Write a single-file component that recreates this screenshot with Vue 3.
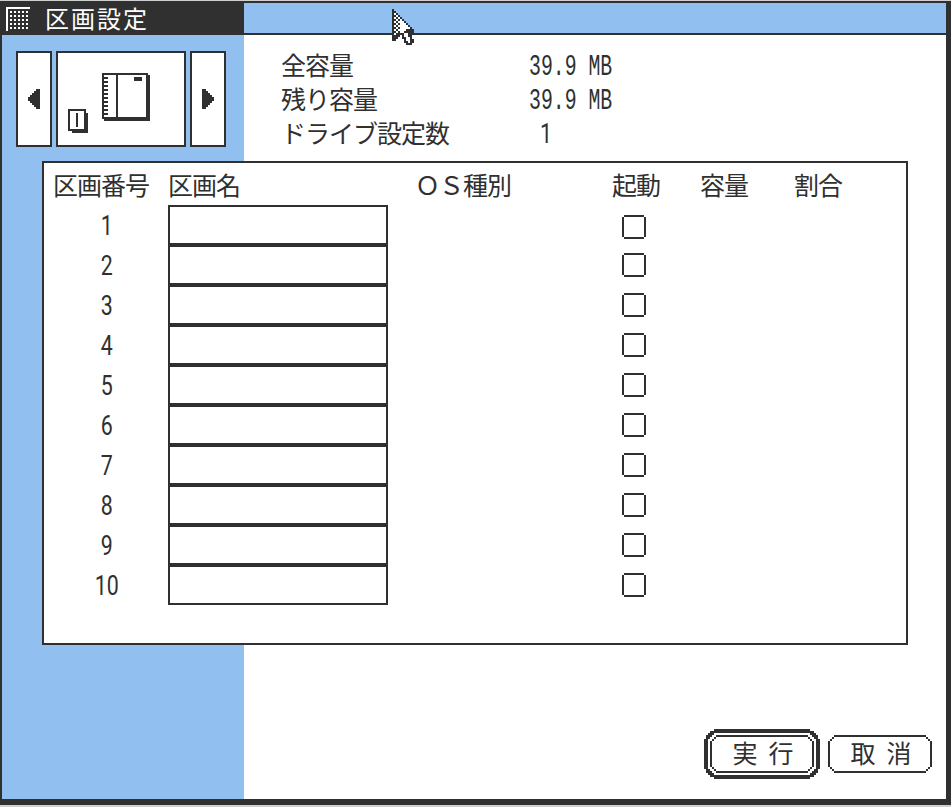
<script setup>
const rows = Array.from({ length: 10 }, (_, i) => i + 1)

// '#' is the outline, 'o' the white fill, '.' is transparent
const cursor = [
  '#..........',
  '##.........',
  '#o#........',
  '##o#.......',
  '#o#o#......',
  '##o#o#.....',
  '#o#ooo#....',
  '##o#ooo#...',
  '#o#ooooo#..',
  '##o#ooooo#.',
  '#o#oooo####',
  '##o#oo#####',
  '#o####oo#..',
  '####.#oo##.',
  '###..##oo#.',
  '##....#oo##',
  '......##o##',
  '.......###.'
]
const pixels = []
cursor.forEach((line, y) => {
  ;[...line].forEach((c, x) => {
    if (c !== '.') pixels.push({ x, y, fill: c === '#' ? '#303030' : '#fff' })
  })
})
const ticks = Array.from({ length: 10 }, (_, i) => 4 + i * 4)
const dots = []
for (let y = 0; y < 5; y++) for (let x = 0; x < 5; x++) dots.push([4 + x * 4, 4 + y * 4])
</script>

<template>
  <div class="screen">
    <div class="window">
      <header class="titlebar">
        <div class="title">
          <svg class="menu-icon" width="24" height="24" shape-rendering="crispEdges" fill="#fff">
            <path d="M0 0H24V2H2V24H0Z" />
            <rect v-for="(d, i) in dots" :key="i" :x="d[0]" :y="d[1]" width="2" height="2" />
          </svg>
          <span class="jp title-text">区画設定</span>
        </div>
        <div class="title-fill"></div>
      </header>
      <main class="body">
        <section class="top">
          <div class="selector">
            <button class="arrow">
              <svg width="12" height="20" shape-rendering="crispEdges" fill="#303030">
                <path d="M12 0H8V2H6V4H4V6H2V8H0V12H2V14H4V16H6V18H8V20H12Z" />
              </svg>
            </button>
            <div class="drive">
              <svg width="126" height="92" shape-rendering="crispEdges" fill="#303030">
                <g transform="translate(44 20)">
                  <path fill-rule="evenodd" d="M0 0H46V2H48V48H2V46H0ZM2 2V44H14V2ZM16 2V44H44V2Z" />
                  <rect x="32" y="4" width="8" height="4" />
                  <rect v-for="t in ticks" :key="t" x="2" :y="t" width="4" height="2" />
                </g>
                <g transform="translate(10 56)">
                  <path fill-rule="evenodd" d="M0 0H18V4H20V24H4V22H0ZM2 2V20H16V2Z" />
                  <rect x="8" y="4" width="2" height="14" />
                </g>
              </svg>
            </div>
            <button class="arrow">
              <svg width="12" height="20" shape-rendering="crispEdges" fill="#303030">
                <path d="M0 0H4V2H6V4H8V6H10V8H12V12H10V14H8V16H6V18H4V20H0Z" />
              </svg>
            </button>
          </div>
          <dl class="info">
            <dt class="jp">全容量</dt><dd><span class="mono">39.9 MB</span></dd>
            <dt class="jp">残り容量</dt><dd><span class="mono">39.9 MB</span></dd>
            <dt class="jp">ドライブ設定数</dt><dd class="count"><span class="num">1</span></dd>
          </dl>
        </section>

        <section class="panel">
          <div class="grid head jp">
            <span>区画番号</span><span>区画名</span><span>ＯＳ種別</span><span>起動</span><span>容量</span><span>割合</span>
          </div>
          <div v-for="n in rows" :key="n" class="grid row">
            <div class="index"><span class="num">{{ n }}</span></div>
            <div class="field"></div>
            <div></div>
            <svg class="check" :class="{ first: n === 1 }" width="24" height="24" shape-rendering="crispEdges" fill="#303030">
              <path d="M2 0H22V2H2ZM2 22H22V24H2ZM0 2H2V22H0ZM22 2H24V22H22Z" />
            </svg>
          </div>
        </section>

        <footer class="actions">
          <button class="btn primary">
            <svg width="116" height="50" shape-rendering="crispEdges" fill="#303030">
              <path fill-rule="evenodd" d="M10 0H106V2H110V4H112V6H114V10H116V40H114V44H112V46H110V48H106V50H10V48H6V46H4V44H2V40H0V10H2V6H4V4H6V2H10Z M10 4V6H8V8H6V10H4V40H6V42H8V44H10V46H106V44H108V42H110V40H112V10H110V8H108V6H106V4Z" />
              <path d="M12 6H104V8H12ZM12 42H104V44H12ZM6 12H8V38H6ZM108 12H110V38H108ZM10 8H12V10H10ZM8 10H10V12H8ZM104 8H106V10H104ZM106 10H108V12H106ZM8 38H10V40H8ZM10 40H12V42H10ZM106 38H108V40H106ZM104 40H106V42H104Z" />
            </svg>
            <span class="jp">実行</span>
          </button>
          <button class="btn">
            <svg width="104" height="38" shape-rendering="crispEdges" fill="#303030">
              <path d="M6 0H98V2H6ZM6 36H98V38H6ZM0 6H2V32H0ZM102 6H104V32H102ZM4 2H6V4H4ZM2 4H4V6H2ZM98 2H100V4H98ZM100 4H102V6H100ZM2 32H4V34H2ZM4 34H6V36H4ZM100 32H102V34H100ZM98 34H100V36H98Z" />
            </svg>
            <span class="jp">取消</span>
          </button>
        </footer>
      </main>
    </div>
    <svg class="cursor" width="22" height="36" viewBox="0 0 11 18" shape-rendering="crispEdges">
      <rect v-for="(p, i) in pixels" :key="i" :x="p.x" :y="p.y" width="1" height="1" :fill="p.fill" />
    </svg>
  </div>
</template>

<style>
body { margin: 0; background: #d0d0d0; overflow: hidden; }
</style>

<style scoped>
* { box-sizing: border-box; }
.screen {
  position: relative;
  width: 951px;
  height: 807px;
  padding: 1px 0 2px;
  background: #d0d0d0;
  color: #303030;
  font-family: "Noto Sans CJK JP", sans-serif;
}
.window {
  height: 804px;
  display: flex;
  flex-direction: column;
  background: #303030;
  border: solid #303030;
  border-width: 2px 5px 6px 2px;
}
.jp {
  font: 400 25px/24px "Noto Sans CJK JP", sans-serif;
  letter-spacing: -1px;
  white-space: nowrap;
}
.titlebar { display: flex; height: 32px; flex: none; border-bottom: 2px solid #303030; }
.title { width: 242px; display: flex; padding-left: 4px; color: #fff; }
.menu-icon { margin-top: 4px; }
.title-text { margin-left: 15px; font-size: 24px; line-height: 29px; letter-spacing: 2px; }
.title-fill { flex: 1; background: #90bff0; }
.body {
  flex: 1;
  display: flex;
  flex-direction: column;
  background: linear-gradient(to right, #90bff0 242px, #fff 242px);
}
.top { display: flex; height: 126px; flex: none; padding: 16px 0 0 14px; }
.selector { display: flex; gap: 4px; height: 96px; width: 265px; }
.arrow, .drive { border: 2px solid #303030; background: #fff; border-radius: 0; padding: 0; }
.arrow { width: 36px; display: flex; align-items: center; justify-content: center; }
.drive { width: 130px; }
.drive svg { display: block; }
.info {
  margin: 1px 0 0;
  display: grid;
  grid-template-columns: 248px 120px;
  grid-auto-rows: 34px;
}
.info dd { margin: 0; }
.mono, .num { display: inline-block; transform-origin: 0 0; white-space: pre; }
.mono {
  font: 30px/24px "Liberation Mono", monospace;
  margin-top: 3px;
  transform: scaleX(0.66);
}
.num {
  font: 400 28px/24px Roboto, sans-serif;
  transform: scaleX(0.763);
}
.count { padding: 2px 0 0 11px; }
.panel {
  width: 866px;
  height: 484px;
  flex: none;
  margin-left: 40px;
  border: 2px solid #303030;
  background: #fff;
}
.grid { display: grid; grid-template-columns: 115px 247px 197px 88px 94px 1fr; }
.head { height: 42px; padding: 9px 0 0 9px; }
.row { height: 40px; grid-template-columns: 124px 220px 234px 1fr; }
.index { padding: 9px 0 0 2px; text-align: center; }
.index .num { transform-origin: 50% 0; }
.field { border: 2px solid #303030; }
.check { margin-top: 8px; }
.check.first { margin-top: 10px; }
.actions {
  display: flex;
  align-items: center;
  gap: 8px;
  padding: 84px 0 0 702px;
}
.btn { display: grid; place-items: center; padding: 0; border: 0; background: #fff; color: #303030; }
.btn > * { grid-area: 1 / 1; }
.btn .jp { letter-spacing: 11px; padding: 0 0 4px 13px; }
.cursor { position: absolute; left: 392px; top: 9px; }
</style>
